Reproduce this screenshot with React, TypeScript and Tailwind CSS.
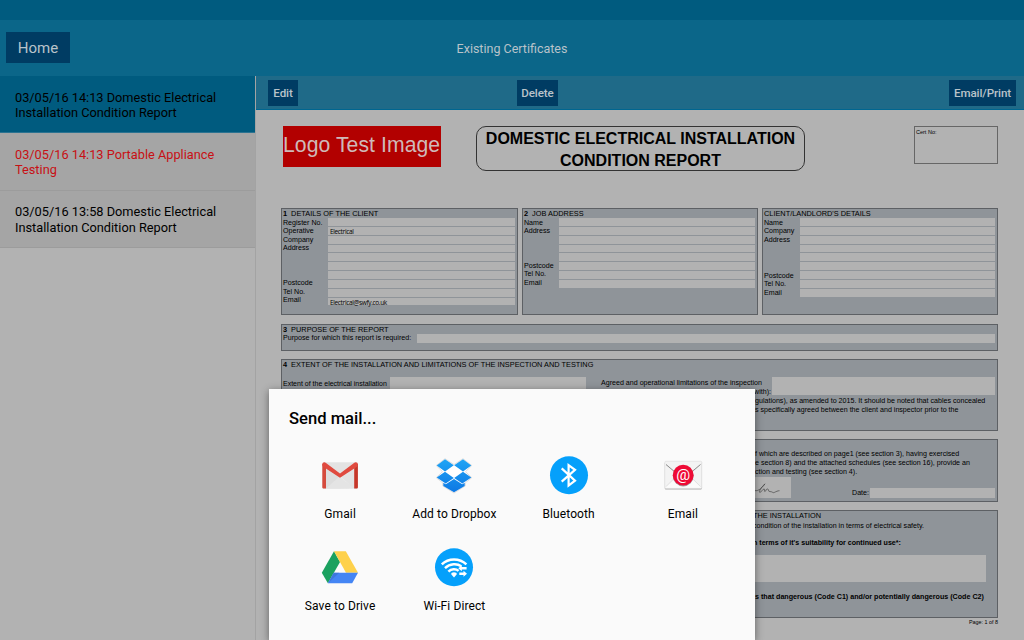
import type { ReactNode } from 'react';
import clsx from 'clsx';

interface Certificate {
  id: number;
  title: string;
  className: string;
}

interface ShareTarget {
  label: string;
  icon: ReactNode;
}

const certificates: Certificate[] = [
  {
    id: 1,
    title: '03/05/16 14:13 Domestic Electrical Installation Condition Report',
    className: 'bg-[#005b7f] text-black border-[#2b7391]',
  },
  {
    id: 2,
    title: '03/05/16 14:13 Portable Appliance Testing',
    className: 'bg-[#a5a5a5] text-[#c81014] border-[#9c9c9c]',
  },
  {
    id: 3,
    title: '03/05/16 13:58 Domestic Electrical Installation Condition Report',
    className: 'bg-[#a5a5a5] text-black border-[#9c9c9c]',
  },
];

function GmailIcon() {
  return (
    <svg viewBox="0 0 40 40" className="h-10 w-10">
      <rect x="2.5" y="7.3" width="35.3" height="26.5" rx="1.5" fill="#e3e3e3" />
      <path d="M6 33.5 20 21l14 12.5z" fill="#eeeeee" />
      <path d="M6 12v21.5h14L34 33 20 22z" fill="#d2d2d2" opacity=".35" />
      <path d="M2.3 9v23.2c0 .9.6 1.4 1.4 1.4H6V9z" fill="#d54b3d" />
      <path d="M37.9 9v23.2c0 .9-.6 1.4-1.4 1.4h-2.3V9z" fill="#c63629" />
      <path d="M2.3 9.4c0-2 2.1-2.8 3.7-1.5l14 10.6 14-10.6c1.6-1.3 3.9-.5 3.9 1.5 0 1.2-.5 2-1.3 2.5L20 22.8 3.6 11.9c-.8-.5-1.3-1.3-1.3-2.5z" fill="#e04a3f" />
    </svg>
  );
}

function DropboxIcon() {
  return (
    <svg viewBox="0 0 40 40" className="h-10 w-10">
      <defs>
        <linearGradient id="dropbox" x1="0" y1="4" x2="0" y2="37" gradientUnits="userSpaceOnUse">
          <stop offset="0" stopColor="#1fa5f5" />
          <stop offset="1" stopColor="#0d78e4" />
        </linearGradient>
      </defs>
      <path
        d="M11 3.7 20 9.6l9-5.9 8.8 6.8-6.3 6.2 6.3 6-6.5 5.1v3.1L20 38 8.7 30.9v-3.1l-6.5-5.1 6.3-6-6.3-6.2z"
        fill="#fff"
        stroke="#dedede"
        strokeWidth="1"
      />
      <path
        d="M11 4.2 19.8 10.3 11 16.5 2.7 10.6zM29 4.2 20.2 10.3 29 16.5 37.3 10.6zM11 16.8 19.8 23 11.7 28.4 2.7 22.6zM29 16.8 20.2 23 28.3 28.4 37.3 22.6zM9.3 27.8 11.8 29.3 20 23.9 28.2 29.3 30.7 27.8V30.9L20 37.2 9.3 30.9z"
        fill="url(#dropbox)"
      />
    </svg>
  );
}

function BluetoothIcon() {
  return (
    <svg viewBox="0 0 40 40" className="h-10 w-10">
      <circle cx="20" cy="20.2" r="19" fill="#05a0fb" />
      <path
        d="M12.7 13.4 26 25.6 19.6 30.6V10.2L26 14.8 12.7 26.6"
        fill="none"
        stroke="#fff"
        strokeWidth="2.2"
      />
    </svg>
  );
}

function EmailIcon() {
  return (
    <svg viewBox="0 0 40 40" className="h-10 w-10">
      <rect x="1.8" y="7.2" width="37" height="27.4" rx="1" fill="#a9a9a9" />
      <rect x="1.8" y="6.3" width="37" height="27.2" rx="1" fill="#f3f3f3" stroke="#dcdcdc" strokeWidth=".6" />
      <path d="M2.5 32.8 15 21h10.5l12.8 11.8z" fill="#fbfbfb" />
      <path d="M3 9.5 14.5 20 3 31.5M37.5 9.5 26 20l11.5 11.5" fill="none" stroke="#d8d8d8" strokeWidth=".7" />
      <path d="M3 9.5 12 17M37.5 9.5 28.5 17" stroke="#777" strokeWidth=".8" />
      <circle cx="20.2" cy="21" r="10.4" fill="#9e9e9e" />
      <circle cx="20.2" cy="20.2" r="10.4" fill="#ee0a35" />
      <text x="20.2" y="24.6" textAnchor="middle" fontSize="15.5" fontFamily="Roboto, sans-serif" fill="#fff">
        @
      </text>
    </svg>
  );
}

function DriveIcon() {
  return (
    <svg viewBox="0 0 40 40" className="h-10 w-10">
      <path d="M14 4.3 20 15 7.9 36.3 1.8 25.7z" fill="#1ba15f" />
      <path d="M14 4.3h11.8L38 25.7H26z" fill="#fed14b" />
      <path d="M13.7 25.7H38l-5.8 10.6H7.9z" fill="#4485f4" />
      <path d="m13.7 25.7 5.6 0L7.9 36.3z" fill="#3a70d1" opacity=".7" />
    </svg>
  );
}

function WifiDirectIcon() {
  return (
    <svg viewBox="0 0 40 40" className="h-10 w-10">
      <circle cx="20" cy="20.2" r="19" fill="#05a0fb" />
      <g fill="none" stroke="#fff" strokeWidth="2.5">
        <path d="M7.8 17.3C14.5 10.8 25.5 10.8 32.4 17.3" />
        <path d="M11 21.2C16 16.5 23 16.3 27.3 19.3" />
        <path d="M14.4 24.7C17.3 21.6 21.8 21.4 24.6 23.9" />
      </g>
      <path d="M17.2 27.3a2.8 2 0 0 1 5.6 0L20 30.4z" fill="#fff" />
      <path d="m24.3 21.3 3.5-2.9v1.7h4.8v2.5h-4.8v1.7zM33 26.7l-3.5-2.9v1.7h-4.2V28h4.2v1.7z" fill="#fff" />
    </svg>
  );
}

const shareTargets: ShareTarget[] = [
  { label: 'Gmail', icon: <GmailIcon /> },
  { label: 'Add to Dropbox', icon: <DropboxIcon /> },
  { label: 'Bluetooth', icon: <BluetoothIcon /> },
  { label: 'Email', icon: <EmailIcon /> },
  { label: 'Save to Drive', icon: <DriveIcon /> },
  { label: 'Wi-Fi Direct', icon: <WifiDirectIcon /> },
];

function ToolbarButton({ className, children }: { className?: string; children: ReactNode }) {
  return (
    <button
      className={clsx(
        'h-[26px] bg-[#003c63] pt-px text-center text-[11.6px] leading-[25px] font-medium tracking-[-0.1px] text-[#b9c3ca]',
        className,
      )}
    >
      {children}
    </button>
  );
}

function Section({ className, children }: { className?: string; children: ReactNode }) {
  return (
    <section className={clsx('border border-[#5d6064] bg-[#8f9499] pl-px', className)}>{children}</section>
  );
}

function SectionTitle({ number, children }: { number?: number; children: ReactNode }) {
  return (
    <h3 className="h-[9px] text-[7.37px] leading-[9px]">
      {number && <b className="mr-1">{number}</b>}
      {children}
    </h3>
  );
}

interface AddressCardProps {
  number?: number;
  title: string;
  labels: string[];
  values: string[];
  labelClassName: string;
  className: string;
}

function AddressCard({ number, title, labels, values, labelClassName, className }: AddressCardProps) {
  return (
    <Section className={clsx('h-[107px]', className)}>
      <SectionTitle number={number}>{title}</SectionTitle>
      <div className="flex">
        <div className={clsx('shrink-0 pt-[0.5px]', labelClassName)}>
          {labels.map((label, i) => (
            <div key={i} className="h-[1lh]">
              {label}
            </div>
          ))}
        </div>
        <div className="mr-[2px] flex-1">
          {values.map((value, i) => (
            <div
              key={i}
              className="h-[8.85px] border-b border-[#8f9499] bg-[#b2b2b2] pl-[2px] font-['Open_Sans',sans-serif] text-[6.5px] leading-[9px] tracking-[-0.35px]"
            >
              {value}
            </div>
          ))}
        </div>
      </div>
    </Section>
  );
}

function CertificateReport() {
  return (
    <div className="flex-1 overflow-hidden bg-[#b2b2b2] pt-[15px] pr-[26px] pl-[25px] font-['Liberation_Sans',sans-serif] text-[7.1px] text-black">
      <div className="flex h-[83px] items-start">
        <div className="mt-px ml-[2px] h-[41px] w-[158px] bg-[#b20000] text-[21.2px] leading-[38px] tracking-[0.06px] whitespace-nowrap text-[#cfb9b9]">
          Logo Test Image
        </div>
        <h2 className="mt-px ml-[35px] h-[45px] w-[329px] rounded-[10px] border border-[#333] pt-px text-center text-[16px] leading-[21.5px] font-bold whitespace-nowrap">
          DOMESTIC ELECTRICAL INSTALLATION
          <br />
          CONDITION REPORT
        </h2>
        <div className="mt-px ml-auto h-[38px] w-[84px] border border-[#666] pt-px pl-px text-[5.5px] leading-[8px]">
          Cert No:
        </div>
      </div>

      <div className="flex gap-[4px]">
        <AddressCard
          number={1}
          title="DETAILS OF THE CLIENT"
          labels={['Register No.', 'Operative', 'Company', 'Address', '', '', '', 'Postcode', 'Tel No.', 'Email']}
          values={['', 'Electrical', '', '', '', '', '', '', '', 'Electrical@swfy.co.uk']}
          labelClassName="w-[45px] leading-[8.65px]"
          className="w-[237px]"
        />
        <AddressCard
          number={2}
          title="JOB ADDRESS"
          labels={['Name', 'Address', '', '', '', 'Postcode', 'Tel No.', 'Email']}
          values={['', '', '', '', '', '', '', '']}
          labelClassName="w-[35px] leading-[8.65px]"
          className="w-[236px]"
        />
        <AddressCard
          title="CLIENT/LANDLORD'S DETAILS"
          labels={['Name', 'Company', 'Address', '', '', '', 'Postcode', 'Tel No.', 'Email']}
          values={['', '', '', '', '', '', '', '', '']}
          labelClassName="w-[36px] leading-[8.85px]"
          className="flex-1"
        />
      </div>

      <Section className="mt-[9px] h-[27px]">
        <SectionTitle number={3}>PURPOSE OF THE REPORT</SectionTitle>
        <div className="mr-[2px] flex leading-[9px]">
          <span className="w-[134px] text-[7.15px]">Purpose for which this report is required:</span>
          <div className="h-[9px] flex-1 bg-[#b2b2b2]" />
        </div>
      </Section>

      <Section className="mt-[8px] h-[72px]">
        <SectionTitle number={4}>
          EXTENT OF THE INSTALLATION AND LIMITATIONS OF THE INSPECTION AND TESTING
        </SectionTitle>
        <div className="mt-[8px] mr-[2px] flex h-[18px]">
          <span className="w-[107px] pt-[2px] text-[7px] leading-[9px] whitespace-nowrap">
            Extent of the electrical installation
          </span>
          <div className="w-[196px] bg-[#b2b2b2]" />
          <div className="ml-[15px] w-[171px] pt-[2px] leading-[9px] whitespace-nowrap">
            Agreed and operational limitations of the inspection
            <div className="pr-px text-right">with):</div>
          </div>
          <div className="flex-1 bg-[#b2b2b2]" />
        </div>
        <p className="mt-[2px] ml-[472px] leading-[9px] whitespace-nowrap">
          gulations), as amended to 2015. It should be noted that cables concealed
          <br />s specifically agreed between the client and inspector prior to the
        </p>
      </Section>

      <Section className="mt-[8px] h-[63px] pt-[10px]">
        <p className="ml-[472px] leading-[9px] whitespace-nowrap">
          f which are described on page1 (see section 3), having exercised
          <br />e section 8) and the attached schedules (see section 16), provide an
          <br />
          ction and testing (see section 4).
        </p>
        <div className="mr-[2px] ml-[457px] flex h-[21px] items-end">
          <div className="flex h-[21px] w-[51px] items-center justify-end bg-[#b2b2b2] pt-[3px] pr-[8px]">
            <svg viewBox="0 0 36 14" className="h-[12px] w-[31px]" fill="none" stroke="#444" strokeWidth=".8">
              <path d="M2 8c3 3 9-1 13-7-3 3-8 9-6 10 2 0 3-4 5-4s-1 3 1 3c2-1 1-3 3-3s0 3 3 3 3 2 5 1 4-2 6-2" />
            </svg>
          </div>
          <span className="ml-auto pr-px leading-[9px]">Date:</span>
          <div className="h-[10px] w-[125px] bg-[#b2b2b2]" />
        </div>
      </Section>

      <Section className="mt-[8px] h-[108px]">
        <div className="ml-[470px] whitespace-nowrap">
          <SectionTitle>THE INSTALLATION</SectionTitle>
          <p className="mt-px leading-[10px]">condition of the installation in terms of electrical safety.</p>
          <p className="mt-[8px] leading-[9px] font-bold">n terms of it's suitability for continued use*:</p>
        </div>
        <div className="mt-[7px] mr-[11px] ml-[4px] h-[27px] bg-[#b2b2b2]" />
        <p className="mt-[10px] ml-[472px] text-[7.15px] leading-[10px] font-bold whitespace-nowrap">
          s that dangerous (Code C1) and/or potentially dangerous (Code C2)
        </p>
      </Section>
      <div className="text-right text-[5.4px] leading-[8px]">Page: 1 of 8</div>
    </div>
  );
}

function ShareSheet() {
  return (
    <div className="absolute top-[389px] left-[269px] h-[251px] w-[486px] bg-[#fafafa] pt-[19px] pr-[15px] pl-[14px] text-black shadow-[0_2px_8px_rgba(0,0,0,0.45)]">
      <h1 className="pl-[6px] text-[16.6px] leading-[22px] font-medium">Send mail...</h1>
      <div className="mt-[25px] grid grid-cols-4">
        {shareTargets.map((target) => (
          <button key={target.label} className="flex h-[92px] flex-col items-center">
            {target.icon}
            <span className="mt-[11px] text-[12px] leading-[16px] tracking-[0.1px] whitespace-nowrap">
              {target.label}
            </span>
          </button>
        ))}
      </div>
    </div>
  );
}

export default function App() {
  return (
    <div className="relative flex h-[640px] w-[1024px] flex-col overflow-hidden bg-[#b2b2b2] font-[Roboto,sans-serif]">
      <div className="h-5 shrink-0 bg-[#005b7f]" />

      <header className="grid h-14 shrink-0 grid-cols-3 items-center bg-[#0b6689] text-[#b9c3ca]">
        <div className="pb-px pl-[6px]">
          <button className="block h-[31px] w-[64px] bg-[#003c63] pt-[2px] text-[15px]">Home</button>
        </div>
        <span className="pt-[2px] text-center text-[12.5px]">Existing Certificates</span>
      </header>

      <div className="flex min-h-0 flex-1">
        <aside className="w-64 shrink-0 border-r border-[#a3a3a3]">
          {certificates.map((cert) => (
            <div
              key={cert.id}
              className={clsx(
                'border-b pt-[13.5px] pr-6 pb-[12.1px] pl-[15px] text-[12.77px] leading-[15.4px]',
                cert.className,
              )}
            >
              {cert.title}
            </div>
          ))}
        </aside>

        <main className="flex min-w-0 flex-1 flex-col">
          <div className="flex h-[34px] shrink-0 items-start border-b border-[#006690] bg-[#1f6a88] pt-[4px] pr-[8px] pl-[12px]">
            <ToolbarButton className="w-[30px]">Edit</ToolbarButton>
            <ToolbarButton className="ml-[219px] w-[41px]">Delete</ToolbarButton>
            <ToolbarButton className="ml-auto w-[67px]">Email/Print</ToolbarButton>
          </div>
          <CertificateReport />
        </main>
      </div>

      <ShareSheet />
    </div>
  );
}
